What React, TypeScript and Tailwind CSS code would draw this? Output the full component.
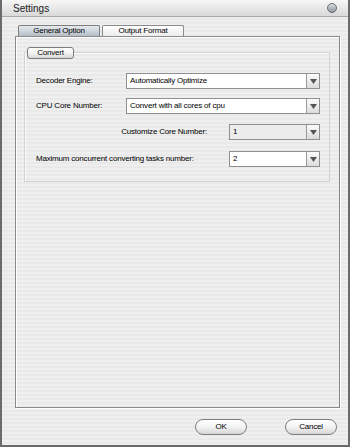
import type { ReactNode } from 'react';

const font = 'font-["Liberation_Sans",Arial,sans-serif]';

function Arrow() {
  return (
    <span className="flex h-full w-[13px] shrink-0 items-center justify-center border-l border-[#9a9a9a] bg-gradient-to-b from-[#fbfbfb] to-[#dcdcdc]">
      <svg width="7" height="5" viewBox="0 0 7 5">
        <path d="M0 0 H7 L3.5 5 Z" fill="#555" />
      </svg>
    </span>
  );
}

function Dropdown({
  value,
  className = '',
  disabled = false,
}: {
  value: string;
  className?: string;
  disabled?: boolean;
}) {
  return (
    <div
      className={`flex h-[16px] items-stretch border border-[#8f8f8f] ${
        disabled ? 'bg-[#ececec]' : 'bg-white'
      } ${className}`}
    >
      <span className="flex-1 truncate pl-[3px] text-[8px] leading-[14px] tracking-[-0.2px] text-black">
        {value}
      </span>
      <Arrow />
    </div>
  );
}

function Row({ children, className = '' }: { children: ReactNode; className?: string }) {
  return <div className={`flex items-center ${className}`}>{children}</div>;
}

function PillButton({ children, className = '' }: { children: ReactNode; className?: string }) {
  return (
    <div
      className={`flex items-center justify-center border border-[#7d7d7d] bg-gradient-to-b from-white via-[#f3f3f3] to-[#d6d6d6] text-[8px] tracking-[-0.2px] text-black ${className}`}
    >
      {children}
    </div>
  );
}

export default function App() {
  return (
    <div
      className={`${font} relative h-[447px] w-[350px] overflow-hidden border-l-2 border-b-2 border-r-2 border-[#6b6b6b] bg-[repeating-linear-gradient(to_bottom,#efefef_0px,#efefef_2px,#e9e9e9_2px,#e9e9e9_4px)]`}
    >
      {/* title bar */}
      <div className="flex h-[17px] items-center justify-between border-b border-[#a8a8a8] bg-gradient-to-b from-[#f7f7f7] to-[#d9d9d9] pl-[11px] pr-[11px]">
        <span className="text-[10px] text-[#222]">Settings</span>
        <span className="h-[10px] w-[10px] rounded-full border border-[#6c6c6c] bg-gradient-to-b from-[#d9dde2] to-[#8f98a3]" />
      </div>

      {/* tabs */}
      <div className="ml-[16px] mt-[8px] flex h-[11px] items-end gap-[2px] text-[8px] tracking-[-0.2px]">
        <div className="flex h-[11px] w-[82px] items-center justify-center rounded-t-[2px] border border-b-0 border-[#7d7d7d] bg-gradient-to-b from-[#e6ebef] to-[#b5bec6] text-black">
          General Option
        </div>
        <div className="flex h-[11px] w-[82px] items-center justify-center rounded-t-[2px] border border-b-0 border-[#8a8a8a] bg-gradient-to-b from-white to-[#ececec] text-black">
          Output Format
        </div>
      </div>

      {/* panel */}
      <div className="ml-[13px] h-[372px] w-[325px] border border-[#8a8a8a] shadow-[inset_1px_1px_0_#ffffff,1px_1px_0_#ffffff]">
        <div className="relative ml-[8px] mt-[15px] h-[130px] w-[306px] border border-[#d2d2d2] shadow-[inset_1px_1px_0_#fbfbfb]">
          <PillButton className="absolute left-[2px] top-[-6px] h-[12px] w-[47px] rounded-[3px]">
            Convert
          </PillButton>

          <div className="flex flex-col pl-[11px] pt-[20px] text-[8px] tracking-[-0.2px] text-black">
            <Row className="h-[16px]">
              <span className="w-[90px]">Decoder Engine:</span>
              <Dropdown value="Automatically Optimize" className="w-[194px]" />
            </Row>
            <Row className="mt-[9px] h-[16px]">
              <span className="w-[90px]">CPU Core Number:</span>
              <Dropdown value="Convert with all cores of cpu" className="w-[194px]" />
            </Row>
            <Row className="mt-[10px] h-[16px]">
              <span className="w-[193px] pr-[22px] text-right">Customize Core Number:</span>
              <Dropdown value="1" disabled className="w-[91px]" />
            </Row>
            <Row className="mt-[11px] h-[16px]">
              <span className="w-[193px]">Maximum concurrent converting tasks number:</span>
              <Dropdown value="2" className="w-[91px]" />
            </Row>
          </div>
        </div>
      </div>

      {/* footer buttons */}
      <div className="mt-[11px] flex justify-end gap-[38px] pr-[11px]">
        <PillButton className="h-[16px] w-[52px] rounded-[8px]">OK</PillButton>
        <PillButton className="h-[16px] w-[52px] rounded-[8px]">Cancel</PillButton>
      </div>
    </div>
  );
}
